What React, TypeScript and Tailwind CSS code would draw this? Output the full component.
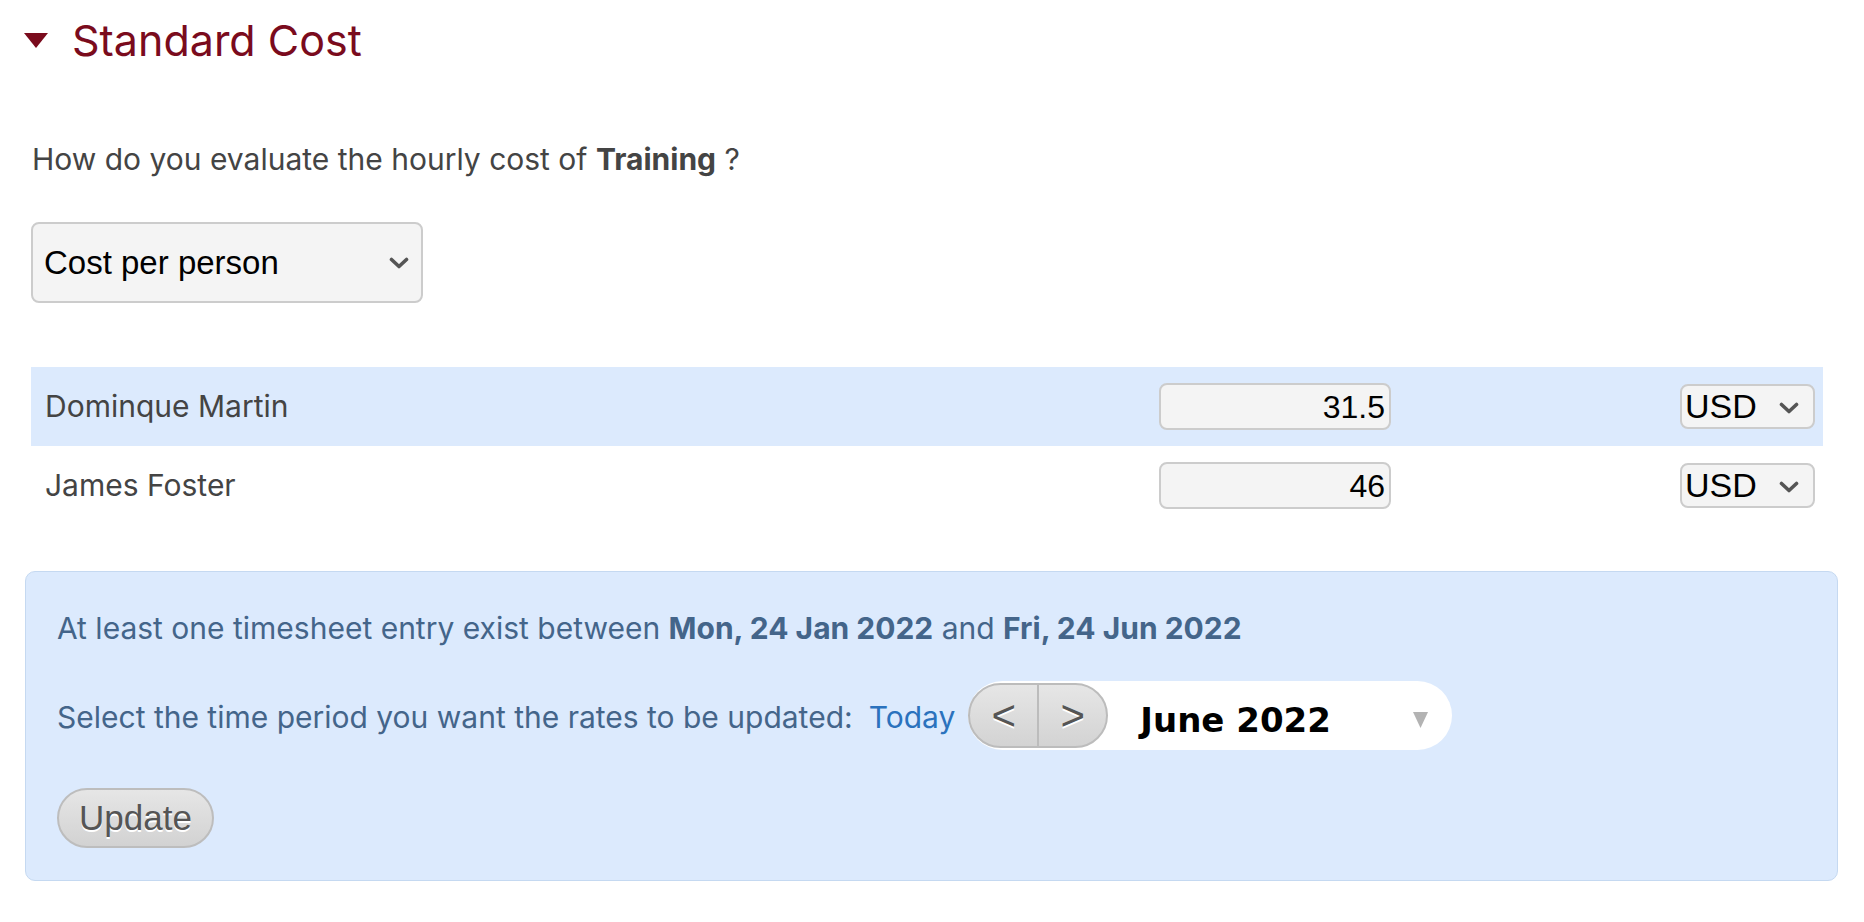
import React from "react";

const Chevron = ({ className = "" }: { className?: string }) => (
  <svg className={className} width="20" height="12" viewBox="0 0 20 12">
    <path d="M2.5 2.5 L10 9.5 L17.5 2.5" fill="none" stroke="#555555" strokeWidth="3.6" strokeLinecap="round" strokeLinejoin="round" />
  </svg>
);

const Row = ({ name, value, highlight }: { name: string; value: string; highlight?: boolean }) => (
  <div className={`flex h-[79px] items-center ${highlight ? "bg-[#dceafd]" : ""}`}>
    <div className="flex-1 pl-[14px] text-[30px] text-[#444444]" style={{ fontFamily: "Inter, sans-serif" }}>
      {name}
    </div>
    <div
      className="flex h-[47px] w-[232px] items-center justify-end rounded-[8px] border-2 border-[#cccccc] bg-[#f4f4f4] pr-[4px] text-[32px] text-black"
      style={{ fontFamily: "'Liberation Sans', Arial, sans-serif" }}
    >
      {value}
    </div>
    <div
      className="ml-[289px] mr-[8px] flex h-[45px] w-[135px] items-center justify-between rounded-[8px] border-2 border-[#cccccc] bg-[#f4f4f4] pl-[3px] pr-[14px] text-[34px] text-black"
      style={{ fontFamily: "'Liberation Sans', Arial, sans-serif" }}
    >
      <span>USD</span>
      <Chevron className="mt-[2px]" />
    </div>
  </div>
);

export default function App() {
  return (
    <div className="min-h-[922px] bg-white pr-[41px]" style={{ fontFamily: "Inter, sans-serif" }}>
      {/* Header */}
      <div className="flex h-[80px] items-center pl-[24px]">
        <svg width="24" height="15" viewBox="0 0 24 15">
          <polygon points="0,0 24,0 12,15" fill="#7a0b1d" />
        </svg>
        <div className="ml-[24px] text-[43px] leading-none text-[#7a0b1d]">Standard Cost</div>
      </div>

      <div className="pl-[31px]">
        {/* Question */}
        <div className="mt-[61px] flex h-[36px] items-center pl-[1px] text-[30px] text-[#444444]">
          <span>
            How do you evaluate the hourly cost of <b className="font-bold">Training</b> ?
          </span>
        </div>

        {/* Select */}
        <div
          className="mt-[45px] flex h-[81px] w-[392px] items-center justify-between rounded-[8px] border-2 border-[#cccccc] bg-[#f4f4f4] pl-[11px] pr-[12px] text-[33px] text-black"
          style={{ fontFamily: "'Liberation Sans', Arial, sans-serif" }}
        >
          <span>Cost per person</span>
          <Chevron />
        </div>

        {/* Rows */}
        <div className="mt-[64px]">
          <Row name="Dominque Martin" value="31.5" highlight />
          <Row name="James Foster" value="46" />
        </div>
      </div>

      {/* Info box */}
      <div className="ml-[25px] mr-[-15px] mt-[46px] rounded-[10px] border border-[#c5d9f1] bg-[#dceafd] pb-[32px] pl-[31px] pt-[38px] text-[30px] text-[#44658a]">
        <div className="flex h-[36px] items-center">
          <span>
            At least one timesheet entry exist between <b className="font-bold">Mon, 24 Jan 2022</b> and{" "}
            <b className="font-bold">Fri, 24 Jun 2022</b>
          </span>
        </div>

        <div className="mt-[35px] flex h-[69px] items-center">
          <span className="pt-[4px]">Select the time period you want the rates to be updated:</span>
          <span className="ml-[16px] pt-[4px] text-[#2b72bd]">Today</span>
          <div className="ml-[13px] flex h-[69px] w-[484px] items-center rounded-full bg-white">
            <div className="flex h-[65px] w-[140px] overflow-hidden rounded-full border-2 border-[#bcbcbc] bg-gradient-to-b from-[#e6e6e6] to-[#d3d3d3]">
              <div
                className="flex flex-1 items-center justify-center border-r-2 border-[#bcbcbc] text-[42px] text-[#555555] [text-shadow:0_2px_0_#ffffff]"
                style={{ fontFamily: "'Liberation Sans', Arial, sans-serif" }}
              >
                &lt;
              </div>
              <div
                className="flex flex-1 items-center justify-center text-[42px] text-[#555555] [text-shadow:0_2px_0_#ffffff]"
                style={{ fontFamily: "'Liberation Sans', Arial, sans-serif" }}
              >
                &gt;
              </div>
            </div>
            <div
              className="ml-[32px] flex-1 pt-[9px] text-[34px] font-bold text-black"
              style={{ fontFamily: "'DejaVu Sans', Verdana, sans-serif" }}
            >
              June 2022
            </div>
            <svg className="mr-[24px] mt-[8px]" width="15" height="16" viewBox="0 0 15 16">
              <polygon points="0,0 15,0 7.5,16" fill="#b3b3b3" />
            </svg>
          </div>
        </div>

        <div className="mt-[38px]">
          <div
            className="flex h-[60px] w-[157px] items-center justify-center rounded-full border-2 border-[#bdbdbd] bg-gradient-to-b from-[#e6e6e6] to-[#d2d2d2] text-[35px] text-[#555555] [text-shadow:0_2px_0_#ffffff]"
            style={{ fontFamily: "'Liberation Sans', Arial, sans-serif" }}
          >
            Update
          </div>
        </div>
      </div>
    </div>
  );
}
